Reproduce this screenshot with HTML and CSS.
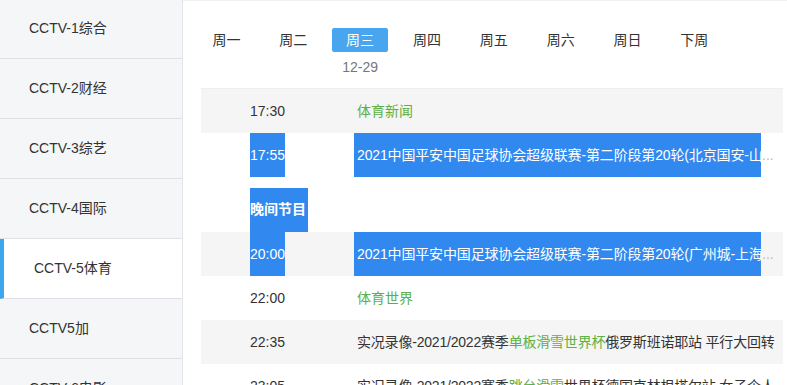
FILE: index.html
```html
<!DOCTYPE html>
<html lang="zh">
<head>
    <meta charset="UTF-8">
    <meta name="viewport" content="width=device-width, initial-scale=1.0">
    <title>节目单</title>
    <link rel="stylesheet" href="styles.css">
</head>
<body>
    <div class="side">
        <div class="chan">CCTV-1综合</div>
        <div class="chan">CCTV-2财经</div>
        <div class="chan">CCTV-3综艺</div>
        <div class="chan">CCTV-4国际</div>
        <div class="chan active">CCTV-5体育</div>
        <div class="chan">CCTV5加</div>
        <div class="chan">CCTV-6电影</div>
    </div>

    <div class="main">
        <div class="week">
            <div class="day"><span>周一</span></div>
            <div class="day"><span>周二</span></div>
            <div class="day on"><span>周三</span><em>12-29</em></div>
            <div class="day"><span>周四</span></div>
            <div class="day"><span>周五</span></div>
            <div class="day"><span>周六</span></div>
            <div class="day"><span>周日</span></div>
            <div class="day"><span>下周</span></div>
        </div>

        <div class="list">
            <div class="row gray">
                <span class="time">17:30</span>
                <span class="title green">体育新闻</span>
            </div>
            <div class="row">
                <span class="time sel">17:55</span>
                <span class="title sel clip">2021中国平安中国足球协会超级联赛-第二阶段第20轮(北京国安-山</span><span class="more">...</span>
            </div>
            <div class="part"><span class="sel">晚间节目</span></div>
            <div class="row gray">
                <span class="time sel">20:00</span>
                <span class="title sel clip">2021中国平安中国足球协会超级联赛-第二阶段第20轮(广州城-上海</span><span class="more">...</span>
            </div>
            <div class="row">
                <span class="time">22:00</span>
                <span class="title green">体育世界</span>
            </div>
            <div class="row gray">
                <span class="time">22:35</span>
                <span class="title tight">实况录像-2021/2022赛季<b>单板滑雪世界杯</b>俄罗斯班诺耶站 平行大回转</span>
            </div>
            <div class="row">
                <span class="time">23:05</span>
                <span class="title tight">实况录像-2021/2022赛季<b>跳台滑雪</b>世界杯德国克林根塔尔站 女子个人</span>
            </div>
        </div>
    </div>
</body>
</html>
```

FILE: styles.css
```css
* {
    margin: 0;
    padding: 0;
    box-sizing: border-box;
}

body {
    font-family: 'Liberation Sans', 'Noto Sans CJK SC', sans-serif;
    font-size: 14px;
    color: #333;
    background: white;
    display: flex;
    height: 385px;
    overflow: hidden;
}

.side {
    width: 183px;
    flex-shrink: 0;
    background: #f5f6f8;
    border-right: 1px solid #e3e5e9;
    margin-top: -1px;
}

.chan {
    height: 60px;
    line-height: 59px;
    padding-left: 29px;
    border-bottom: 1px solid #dfe1e5;
    white-space: nowrap;
}

.chan.active {
    background: white;
    border-left: 4px solid #3ea6ee;
    padding-left: 30px;
}

.main {
    flex: 1;
    border-top: 1px solid #f0f0f0;
    padding: 0 4px 0 18px;
    overflow: hidden;
}

.week {
    display: flex;
    padding-top: 27px;
    margin-left: -8px;
    height: 87px;
}

.day {
    width: 66.85px;
    display: flex;
    flex-direction: column;
    align-items: center;
}

.day span {
    width: 56px;
    height: 24px;
    line-height: 24px;
    text-align: center;
    border-radius: 2px;
}

.day.on span {
    background: #49a6ee;
    color: white;
}

.day em {
    font-style: normal;
    color: #777;
    line-height: 30px;
}

.list {
    border-top: 1px solid #eeeeee;
    margin-top: 0;
}

.row {
    height: 44px;
    line-height: 44px;
    padding-left: 49px;
    white-space: nowrap;
    display: flex;
}

.row.gray {
    background: #f5f5f5;
}

.time {
    display: inline-block;
    width: 107px;
}

.time.sel {
    width: 35px;
    margin-right: 72px;
}

.title b {
    font-weight: normal;
    color: #5cb044;
}

.tight {
    letter-spacing: -0.2px;
}

.green {
    color: #5cb044;
}

.sel {
    background: #3189ef;
    color: white;
}

.clip {
    width: 407px;
    padding-left: 3px;
    margin-left: -3px;
    letter-spacing: -0.15px;
}

.more {
    color: #bbb;
    padding-left: 1px;
}

.part {
    height: 55px;
    padding: 11px 0 0 49px;
}

.part .sel {
    display: inline-block;
    height: 44px;
    line-height: 43px;
    padding-right: 2px;
    font-weight: bold;
}
```
